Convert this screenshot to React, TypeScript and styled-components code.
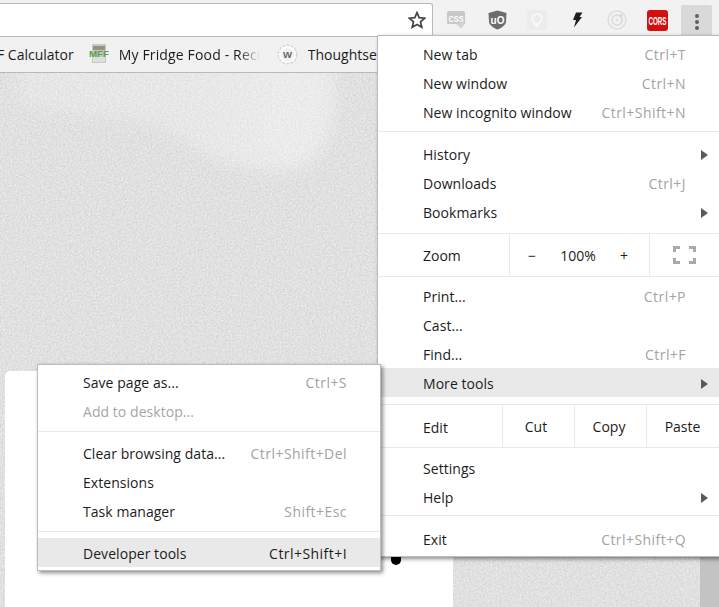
import styled, { createGlobalStyle } from "styled-components";

const GlobalStyle = createGlobalStyle`
  html, body {
    margin: 0;
    padding: 0;
    overflow: hidden;
    background: #e2e2e2;
    font-family: "Open Sans", "Noto Sans", sans-serif;
  }
`;

const Page = styled.div`
  position: relative;
  width: 719px;
  height: 607px;
  overflow: hidden;
  display: flex;
  flex-direction: column;
  color: #1c1c1c;
  font-size: 14px;
`;

const Toolbar = styled.div`
  height: 36px;
  flex: none;
  display: flex;
  align-items: flex-end;
  padding-right: 7px;
  background: #f2f2f2;
  border-bottom: 1px solid #b9b9b9;
`;

const Omnibox = styled.div`
  flex: none;
  width: 433px;
  height: 33px;
  margin-right: 4px;
  box-sizing: border-box;
  display: flex;
  align-items: center;
  justify-content: flex-end;
  padding-right: 6px;
  background: #fff;
  border: 1px solid #b9b9b9;
  border-left: none;
  border-bottom: none;
  border-top-right-radius: 3px;
`;

const ExtButton = styled.div`
  flex: none;
  width: 40px;
  height: 36px;
  box-sizing: border-box;
  padding-top: 4px;
  display: flex;
  align-items: center;
  justify-content: center;
`;

const KebabButton = styled.div`
  flex: none;
  width: 31px;
  height: 31px;
  box-sizing: border-box;
  padding-top: 2px;
  margin-left: 4px;
  display: flex;
  flex-direction: column;
  align-items: center;
  justify-content: center;
  gap: 2px;
  background: #d9d9d9;
  border-radius: 2px 2px 0 0;
`;

const KebabDot = styled.span`
  width: 4px;
  height: 4px;
  border-radius: 50%;
  background: #5f5f5f;
`;

const BookmarkBar = styled.div`
  height: 36px;
  box-sizing: border-box;
  padding-bottom: 1px;
  flex: none;
  display: flex;
  align-items: center;
  background: #f1f1f1;
  border-bottom: 1px solid #b9b9b9;
  white-space: nowrap;
`;

const Bookmark = styled.div<{ $offset: number }>`
  flex: none;
  display: flex;
  align-items: center;
  gap: 10px;
  margin-left: ${({ $offset }) => $offset}px;
`;

const BookmarkLabel = styled.span<{ $fade?: boolean }>`
  display: block;
  overflow: hidden;
  ${({ $fade }) =>
    $fade &&
    `
    width: 141px;
    letter-spacing: 0.15px;
    mask-image: linear-gradient(to right, #000 85%, transparent 100%);
  `}
`;

const Content = styled.div`
  position: relative;
  flex: 1;
  min-height: 0;
  overflow: hidden;
  display: flex;
  align-items: flex-start;
  justify-content: space-between;
  padding-left: 5px;
  background: #e2e2e2;
`;

const Texture = styled.svg`
  position: absolute;
  left: 0;
  top: 0;
`;

const Card = styled.div`
  position: relative;
  width: 448px;
  height: 300px;
  margin-top: 298px;
  background: #fff;
  border-radius: 5px 0 0 0;
`;

const BlackDot = styled.span`
  position: absolute;
  left: 386px;
  top: 170px;
  width: 10px;
  height: 24px;
  border-radius: 5px;
  background: #000;
`;

const Rail = styled.div`
  position: relative;
  flex: none;
  align-self: stretch;
  width: 19px;
  background: #c3c3c3;
`;

const Menu = styled.div<{ $side: "main" | "sub" }>`
  position: absolute;
  box-sizing: border-box;
  background: #fff;
  border: 1px solid #bcbcbc;
  box-shadow: 2px 2px 4px rgba(0, 0, 0, 0.45);
  white-space: nowrap;
  ${({ $side }) =>
    $side === "main"
      ? `
    left: 377px;
    top: 35px;
    width: 343px;
    height: 522px;
    padding-top: 3px;
  `
      : `
    left: 37px;
    top: 364px;
    width: 344px;
    height: 207px;
    padding-top: 2px;
  `}
`;

const Row = styled.div<{ $active?: boolean }>`
  height: 29px;
  box-sizing: border-box;
  display: flex;
  align-items: center;
  padding: 2px 33px 0 45px;
  background: ${({ $active }) => ($active ? "#e9e9e9" : "transparent")};
`;

const Label = styled.span<{ $disabled?: boolean }>`
  flex: 1;
  letter-spacing: 0.05px;
  color: ${({ $disabled }) => ($disabled ? "#a6a6a6" : "inherit")};
`;

const Shortcut = styled.span<{ $strong?: boolean }>`
  letter-spacing: 0.45px;
  color: ${({ $strong }) => ($strong ? "#1c1c1c" : "#a3a3a3")};
`;

const Arrow = styled.span`
  width: 0;
  height: 0;
  margin-right: -22px;
  border-left: 7px solid #5a5a5a;
  border-top: 5px solid transparent;
  border-bottom: 5px solid transparent;
`;

const Separator = styled.div<{ $before: number; $after: number }>`
  height: 1px;
  margin: ${({ $before, $after }) => `${$before}px 0 ${$after}px`};
  background: #e9e9e9;
`;

const ToolRow = styled.div`
  height: 42px;
  display: flex;
  align-items: stretch;
  padding-left: 45px;
`;

const ToolLabel = styled.span<{ $lift?: boolean }>`
  flex: 1;
  display: flex;
  align-items: center;
  padding-top: ${({ $lift }) => ($lift ? 0 : 2)}px;
`;

const ToolCell = styled.div<{ $width: number }>`
  flex: none;
  width: ${({ $width }) => $width}px;
  box-sizing: border-box;
  display: flex;
  align-items: center;
  justify-content: center;
  border-left: 1px solid #e9e9e9;
`;

const EditCell = styled(ToolCell)<{ $inset: number }>`
  padding-right: ${({ $inset }) => $inset}px;
`;

const ZoomControls = styled.div`
  flex: 1;
  display: flex;
  align-items: center;
  justify-content: space-between;
  padding: 0 21px 0 18px;
`;

const ExtText = styled.text`
  font-family: "Liberation Sans", sans-serif;
  font-weight: 700;
  fill: #fff;
`;

const Star = () => (
  <svg width="18" height="18" viewBox="0 0 18 18">
    <polygon
      points="9,1.6 11.2,6.7 16.7,7.2 12.5,10.8 13.8,16.2 9,13.4 4.2,16.2 5.5,10.8 1.3,7.2 6.8,6.7"
      fill="none"
      stroke="#444"
      strokeWidth="1.7"
      strokeLinejoin="miter"
    />
  </svg>
);

const CssIcon = () => (
  <svg width="20" height="18" viewBox="0 0 20 18">
    <rect x="0" y="0" width="18" height="13" rx="1.5" fill="#c8c8c8" />
    <polygon points="9,13 19.5,11 14,17.5" fill="#d4d4d4" />
    <ExtText x="9" y="10.5" fontSize="9" textAnchor="middle" textLength="15" lengthAdjust="spacingAndGlyphs">
      CSS
    </ExtText>
  </svg>
);

const ShieldIcon = () => (
  <svg width="19" height="20" viewBox="0 0 19 20">
    <path d="M9.5 0.5 L18.5 3 L18 12 C17.5 15.5 13 18 9.5 19.5 C6 18 1.5 15.5 1 12 L0.5 3 Z" fill="#6d6d6d" />
    <ExtText x="9.5" y="13.5" fontSize="10" textAnchor="middle">
      uO
    </ExtText>
  </svg>
);

const BulbIcon = () => (
  <svg width="20" height="20" viewBox="0 0 20 20">
    <rect width="20" height="20" rx="1" fill="#ececec" />
    <path
      d="M10 4 a4.6 4.6 0 0 1 2.6 8.4 L12.2 14 H7.8 L7.4 12.4 A4.6 4.6 0 0 1 10 4 Z M8.4 16 H11.6"
      fill="none"
      stroke="#fbfbfb"
      strokeWidth="1.3"
    />
  </svg>
);

const BoltIcon = () => (
  <svg width="11" height="16" viewBox="0 0 11 16">
    <polygon points="4,0.5 10.5,0.5 7.5,5 10,5 2,15.5 4,8 1,8" fill="#1d1d1d" />
  </svg>
);

const TargetIcon = () => (
  <svg width="20" height="20" viewBox="0 0 20 20" fill="none" stroke="#dedede">
    <circle cx="10" cy="10" r="9" strokeWidth="1.5" />
    <circle cx="10" cy="10" r="5" strokeWidth="2" />
    <circle cx="14" cy="5.5" r="1.6" fill="#d6d6d6" stroke="none" />
    <circle cx="10" cy="10" r="1.5" fill="#e0e0e0" stroke="none" />
  </svg>
);

const CorsIcon = () => (
  <svg width="21" height="21" viewBox="0 0 21 21">
    <rect width="21" height="21" rx="3" fill="#d30f0f" />
    <ExtText x="10.5" y="14.5" fontSize="10" textAnchor="middle" textLength="18" lengthAdjust="spacingAndGlyphs">
      CORS
    </ExtText>
  </svg>
);

const FridgeIcon = () => (
  <svg width="20" height="20" viewBox="0 0 20 20">
    <rect x="3" y="0" width="14" height="19" fill="#c9c9c4" />
    <rect x="4" y="2" width="12" height="4" fill="#9c8f86" />
    <rect x="4" y="13" width="12" height="5" fill="#dedede" />
    <text
      x="10"
      y="12.5"
      fontSize="9.5"
      fontWeight="700"
      textAnchor="middle"
      textLength="20"
      lengthAdjust="spacingAndGlyphs"
      fill="#58a04e"
      fontFamily="Liberation Sans, sans-serif"
    >
      MFF
    </text>
  </svg>
);

const ThoughtIcon = () => (
  <svg width="21" height="21" viewBox="0 0 21 21">
    <circle cx="10.5" cy="10.5" r="9.2" fill="#fff" stroke="#d4d4d4" strokeWidth="1.4" strokeDasharray="3 1.2" />
    <circle cx="10.5" cy="10.5" r="6.6" fill="#f1f1f1" />
    <text x="10.5" y="14" fontSize="9.5" fontWeight="700" textAnchor="middle" fill="#666" fontFamily="Liberation Sans, sans-serif">
      W
    </text>
  </svg>
);

const FullscreenIcon = () => (
  <svg width="23" height="18" viewBox="0 0 23 18" fill="none" stroke="#a9a9a9" strokeWidth="3">
    <path d="M1.5 6 V1.5 H7" />
    <path d="M16 1.5 H21.5 V6" />
    <path d="M1.5 12 V16.5 H7" />
    <path d="M16 16.5 H21.5 V12" />
  </svg>
);

const PageTexture = () => (
  <Texture width="719" height="533" viewBox="0 0 719 533">
    <defs>
      <filter id="grain" x="0" y="0" width="100%" height="100%" colorInterpolationFilters="sRGB">
        <feTurbulence type="fractalNoise" baseFrequency="0.55" numOctaves="3" seed="4" />
        <feColorMatrix
          type="matrix"
          values="0.15 0 0 0 0.805  0.15 0 0 0 0.805  0.15 0 0 0 0.805  0 0 0 0 1"
        />
      </filter>
      <filter id="soft" x="-20%" y="-20%" width="140%" height="140%">
        <feGaussianBlur stdDeviation="8" />
      </filter>
      <linearGradient id="blob" x1="0" y1="0" x2="1" y2="0">
        <stop offset="0" stopColor="#fff" stopOpacity="0.18" />
        <stop offset="0.6" stopColor="#fff" stopOpacity="0.24" />
        <stop offset="0.85" stopColor="#fff" stopOpacity="0.36" />
      </linearGradient>
    </defs>
    <rect width="719" height="533" filter="url(#grain)" />
    <path
      d="M14 -20 L328 -20 C342 40 330 92 290 96 C250 100 205 88 170 58 C120 34 60 50 20 30 Z"
      fill="url(#blob)"
      filter="url(#soft)"
    />
  </Texture>
);

const mainTop = [
  { label: "New tab", keys: "Ctrl+T" },
  { label: "New window", keys: "Ctrl+N" },
  { label: "New incognito window", keys: "Ctrl+Shift+N" },
];

const mainHistory = [
  { label: "History", more: true },
  { label: "Downloads", keys: "Ctrl+J" },
  { label: "Bookmarks", more: true },
];

const mainPrint = [
  { label: "Print...", keys: "Ctrl+P" },
  { label: "Cast..." },
  { label: "Find...", keys: "Ctrl+F" },
  { label: "More tools", more: true, active: true },
];

const mainSettings = [{ label: "Settings" }, { label: "Help", more: true }];

const subSave = [
  { label: "Save page as...", keys: "Ctrl+S" },
  { label: "Add to desktop...", disabled: true },
];

const subData = [
  { label: "Clear browsing data...", keys: "Ctrl+Shift+Del" },
  { label: "Extensions" },
  { label: "Task manager", keys: "Shift+Esc" },
];

type Item = {
  label: string;
  keys?: string;
  more?: boolean;
  active?: boolean;
  disabled?: boolean;
};

const MenuRows = ({ items }: { items: Item[] }) => (
  <>
    {items.map((item) => (
      <Row key={item.label} $active={item.active}>
        <Label $disabled={item.disabled}>{item.label}</Label>
        {item.keys && <Shortcut $strong={item.active}>{item.keys}</Shortcut>}
        {item.more && <Arrow />}
      </Row>
    ))}
  </>
);

export default function App() {
  return (
    <Page>
      <GlobalStyle />
      <Toolbar>
        <Omnibox>
          <Star />
        </Omnibox>
        <ExtButton><CssIcon /></ExtButton>
        <ExtButton><ShieldIcon /></ExtButton>
        <ExtButton><BulbIcon /></ExtButton>
        <ExtButton><BoltIcon /></ExtButton>
        <ExtButton><TargetIcon /></ExtButton>
        <ExtButton><CorsIcon /></ExtButton>
        <KebabButton>
          <KebabDot />
          <KebabDot />
          <KebabDot />
        </KebabButton>
      </Toolbar>

      <BookmarkBar>
        <Bookmark $offset={-3}>
          <BookmarkLabel>F Calculator</BookmarkLabel>
        </Bookmark>
        <Bookmark $offset={15}>
          <FridgeIcon />
          <BookmarkLabel $fade>My Fridge Food - Recipes</BookmarkLabel>
        </Bookmark>
        <Bookmark $offset={17}>
          <ThoughtIcon />
          <BookmarkLabel>Thoughtseize</BookmarkLabel>
        </Bookmark>
      </BookmarkBar>

      <Content>
        <PageTexture />
        <Card>
          <BlackDot />
        </Card>
        <Rail />
      </Content>

      <Menu $side="main">
        <MenuRows items={mainTop} />
        <Separator $before={5} $after={7} />
        <MenuRows items={mainHistory} />
        <Separator $before={7} $after={0} />
        <ToolRow>
          <ToolLabel $lift>Zoom</ToolLabel>
          <ToolCell $width={140}>
            <ZoomControls>
              <span>−</span>
              <span>100%</span>
              <span>+</span>
            </ZoomControls>
          </ToolCell>
          <ToolCell $width={70}>
            <FullscreenIcon />
          </ToolCell>
        </ToolRow>
        <Separator $before={0} $after={4} />
        <MenuRows items={mainPrint} />
        <Separator $before={7} $after={0} />
        <ToolRow>
          <ToolLabel>Edit</ToolLabel>
          <EditCell $width={72} $inset={5}>Cut</EditCell>
          <EditCell $width={72} $inset={3}>Copy</EditCell>
          <EditCell $width={73} $inset={1}>Paste</EditCell>
        </ToolRow>
        <Separator $before={0} $after={5} />
        <MenuRows items={mainSettings} />
        <Separator $before={4} $after={8} />
        <MenuRows items={[{ label: "Exit", keys: "Ctrl+Shift+Q" }]} />
      </Menu>

      <Menu $side="sub">
        <MenuRows items={subSave} />
        <Separator $before={6} $after={6} />
        <MenuRows items={subData} />
        <Separator $before={6} $after={6} />
        <MenuRows items={[{ label: "Developer tools", keys: "Ctrl+Shift+I", active: true }]} />
      </Menu>
    </Page>
  );
}
